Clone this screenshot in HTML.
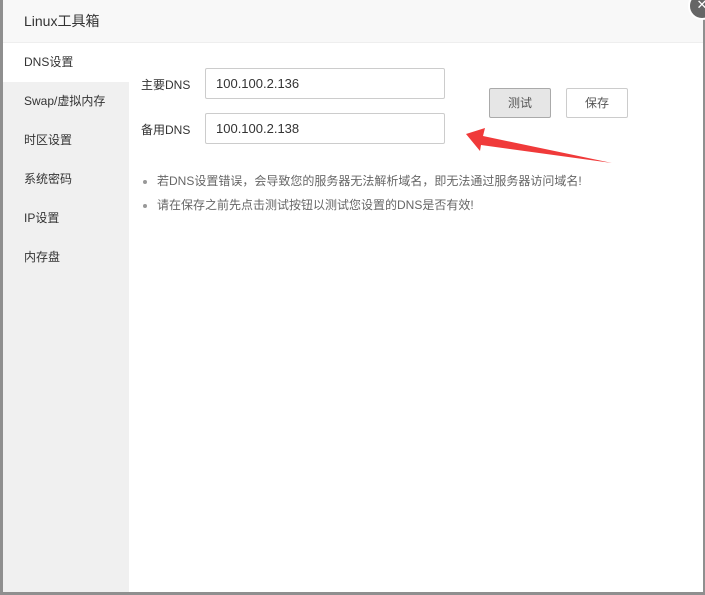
<!DOCTYPE html>
<html><head><meta charset="utf-8"><style>
body{margin:0;width:705px;height:595px;background:#8f8f8f;position:relative;overflow:hidden;font-family:"Liberation Sans","Noto Sans CJK SC",sans-serif;font-size:12px;color:#555}
.dlg{position:absolute;left:3px;top:0;width:700px;height:592px;background:#fff}
.hd{height:42px;background:#f8f8f8;border-bottom:1px solid #eee;line-height:42px;padding-left:21px;font-size:14px;color:#333}
.side{position:absolute;left:0;top:43px;width:126px;bottom:0;background:#f0f0f0}
.side div{height:39px;line-height:39px;padding-left:21px;color:#333;font-size:12px}
.side .a{background:#fff}
.lab{position:absolute;left:141px;color:#333}
.inp{position:absolute;left:205px;border:1px solid #ccc;border-radius:2px;line-height:29px;padding-left:10px;font-size:13px;color:#333;box-sizing:border-box;width:240px;height:31px}
.btn{position:absolute;top:88px;height:30px;line-height:28px;box-sizing:border-box;text-align:center;border-radius:2px;font-size:12px;color:#555}
ul{position:absolute;left:140px;top:169px;margin:0;padding:0 0 0 17px;color:#666;line-height:24px}
li::marker{color:#999}
.x{position:absolute;left:688px;top:-8px;width:24px;height:24px;border-radius:50%;background:#666;border:2px solid #fff;color:#fff;font-size:13px;text-align:center;line-height:22px}
</style></head><body>
<div class="dlg">
<div class="hd">Linux工具箱</div>
<div class="side"><div class="a">DNS设置</div><div>Swap/虚拟内存</div><div>时区设置</div><div>系统密码</div><div>IP设置</div><div>内存盘</div></div>
</div>
<div class="lab" style="top:76px">主要DNS</div>
<div class="inp" style="top:68px">100.100.2.136</div>
<div class="lab" style="top:121px">备用DNS</div>
<div class="inp" style="top:113px">100.100.2.138</div>
<div class="btn" style="left:489px;width:62px;background:#e6e6e6;border:1px solid #aaa">测试</div>
<div class="btn" style="left:566px;width:62px;background:#fff;border:1px solid #ccc">保存</div>
<ul><li>若DNS设置错误，会导致您的服务器无法解析域名，即无法通过服务器访问域名!</li><li>请在保存之前先点击测试按钮以测试您设置的DNS是否有效!</li></ul>
<svg style="position:absolute;left:0;top:0" width="705" height="595"><polygon points="466,134 485,128 483,136 612,163 481,145 480,151" fill="#f03a3a"/></svg>
<div class="x">✕</div>
</body></html>
